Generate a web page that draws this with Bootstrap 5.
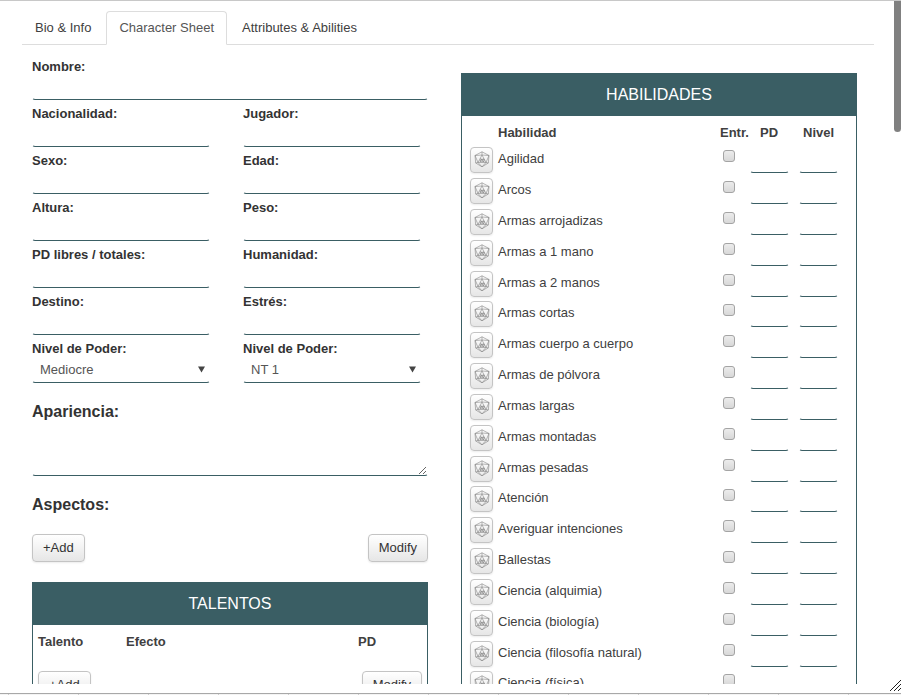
<!DOCTYPE html>
<html lang="es">
<head>
<meta charset="utf-8">
<meta name="viewport" content="width=device-width, initial-scale=1">
<title>Character Sheet</title>
<link rel="stylesheet" href="https://cdn.jsdelivr.net/npm/bootstrap@5.3.0/dist/css/bootstrap.min.css">
<style>
  :root { --teal: #3a5e64; --ink: #404040; }
  body { font: 13px/19px "Liberation Sans", Arial, sans-serif; color: var(--ink); background: #fff; }
  .sheet-window { border-top: 1px solid #c8c8c8; }
  .sheet-scroll { min-height: 0; overflow-y: auto; scrollbar-width: none; padding: 10px 27px 0 22px; }
  .sheet-scroll::-webkit-scrollbar { display: none; }
  .scroll-thumb { width: 7px; height: 131px; background: #808080; border-radius: 0 0 4px 4px; }
  .window-foot { height: 11px; }
  .window-foot .foot-edge { height: 2px; border-top: 1px solid #a8a8a8;
    background: repeating-linear-gradient(90deg, #f4f4f4 0 8px, #ccc 8px 9px, #f4f4f4 9px 70px); }
  .grip { right: 0; bottom: 4px; }

  .nav-tabs { --bs-nav-tabs-border-color: #ddd; --bs-nav-tabs-border-radius: 4px; gap: 2px; }
  .nav-tabs .nav-link { padding: 6px 12px 7px; line-height: 19px; color: var(--ink); font-size: 13px; }
  .nav-tabs .nav-link.active { color: #555; border-color: #ddd #ddd #fff; }

  .sheet-cols { padding: 0 17px 0 10px; gap: 33px; }
  .sheet-cols > * { flex: 1 1 0; min-width: 0; }
  .left-side { padding-top: 8px; }
  .right-side { padding-top: 28px; }
  .field { padding-top: 4px; }
  .field label { display: block; font-weight: bold; color: #333; line-height: 19px; }
  .pairs { display: grid; grid-template-columns: 1fr 1fr; column-gap: 33px; padding-right: 7px; }
  .line-box { display: block; width: 100%; height: 24px; padding: 0 8px; border: 1px solid transparent;
    border-bottom-color: var(--teal); border-radius: 3px; background: transparent; color: #555;
    font-size: 13px; line-height: 19px; outline: 0; }
  select.line-box { height: 25px; padding: 0 7px 3px; appearance: none;
    background: url("data:image/svg+xml,%3Csvg xmlns='http://www.w3.org/2000/svg' width='7' height='7'%3E%3Cpath d='M0 .5h7L3.500 6.500z' fill='%23444'/%3E%3C/svg%3E") no-repeat right 4px top 7px; }
  textarea.line-box { height: 52px; resize: vertical; }
  .block-title { font-size: 16px; line-height: 24px; font-weight: bold; color: #333; margin: 0; }
  .block { padding-top: 17px; }

  .btn-soft { --bs-btn-font-size: 13px; --bs-btn-line-height: 18px; --bs-btn-padding-x: 10px; --bs-btn-padding-y: 4px;
    --bs-btn-border-radius: 4px; --bs-btn-color: #333; --bs-btn-border-color: #c4c4c4; --bs-btn-hover-border-color: #aaa;
    background: linear-gradient(#fff, #e6e6e6); box-shadow: 0 1px 2px rgba(0,0,0,.08); }
  .btn-soft.die { --bs-btn-padding-x: 2px; --bs-btn-padding-y: 2px; width: 23px; height: 26px; display: block; line-height: 0; }

  .panel { border: 1px solid var(--teal); }
  .panel-title { background: var(--teal); color: #fff; font-size: 16px; font-weight: normal; line-height: 42px; text-align: center; margin: 0; }
  .panel table { width: 100%; table-layout: fixed; }
  .panel th { line-height: 19px; padding: 0; }
  .skills { padding: 0 8px; }
  .skills thead tr { height: 31px; }
  .skills thead th { padding: 2px 0 0 1px; }
  .skills tbody tr { height: 31px; }
  .skills tbody tr:nth-child(6n+5) { height: 30px; }
  .skills td { padding: 0; vertical-align: top; line-height: 23px; height: inherit; }
  .skills .line-box { width: 39px; height: 26px; padding: 0 4px; }
  .tick { appearance: none; display: block; width: 12px; height: 12px; margin: 3px 0 0 4px;
    border: 1px solid #a4a4a4; border-radius: 3px; background: linear-gradient(#ececec, #d8d8d8); }
  .tick:checked { background: var(--teal); }
  .talents { padding: 0 5px; }
  #talentos { margin-top: 20px; }
  .c-name { width: 88px; }
  .c-cost { width: 64px; }
  .talents thead tr { height: 33px; }
  .talent-actions { padding: 13px 0; }
  .c-die { width: 28px; }
  .c-tick { width: 31px; }
  .c-num { width: 49px; }
  .skills thead .th-skill { padding-left: 0; }
  .skills thead .th-pd { padding-left: 10px; }
  .skills thead .th-level { padding-left: 4px; }
</style>
<script src="https://cdn.jsdelivr.net/npm/bootstrap@5.3.0/dist/js/bootstrap.bundle.min.js"></script>
</head>
<body>
<svg class="d-none">
  <symbol id="d20" viewBox="0 0 16 18">
    <g fill="none" stroke="#858585" stroke-width=".6" stroke-linejoin="round">
      <path d="M8 .8 15 4.500 14.300 12 8 15.800 1.700 12 1 4.500Z"/>
      <path d="M8 4 4 11.500H12ZM8 .8V4M1 4.500 8 4 15 4.500M1 4.500 4 11.500 1.700 12M15 4.500 12 11.500 14.300 12M4 11.500 8 15.800 12 11.500"/>
      <path stroke="#666" d="M6 8H7.500V9.300H6.200V10.500H7.600M8.600 8H10V10.500H8.600Z"/>
    </g>
  </symbol>
</svg>

<div class="sheet-window vh-100 d-flex flex-column position-relative overflow-hidden">
  <div class="sheet-scroll flex-grow-1">
    <nav class="nav nav-tabs" aria-label="Sheet">
      <a class="nav-link" href="#bio">Bio &amp; Info</a>
      <a class="nav-link active" aria-current="page" href="#sheet">Character Sheet</a>
      <a class="nav-link" href="#attributes">Attributes &amp; Abilities</a>
    </nav>

    <main class="sheet-cols d-flex" id="sheet">
      <div class="left-side">
        <div class="field"><label for="nombre">Nombre:</label><input class="line-box" id="nombre"></div>
        <div class="pairs">
          <div class="field"><label for="nacionalidad">Nacionalidad:</label><input class="line-box" id="nacionalidad"></div>
          <div class="field"><label for="jugador">Jugador:</label><input class="line-box" id="jugador"></div>
          <div class="field"><label for="sexo">Sexo:</label><input class="line-box" id="sexo"></div>
          <div class="field"><label for="edad">Edad:</label><input class="line-box" id="edad"></div>
          <div class="field"><label for="altura">Altura:</label><input class="line-box" id="altura"></div>
          <div class="field"><label for="peso">Peso:</label><input class="line-box" id="peso"></div>
          <div class="field"><label for="pd">PD libres / totales:</label><input class="line-box" id="pd"></div>
          <div class="field"><label for="humanidad">Humanidad:</label><input class="line-box" id="humanidad"></div>
          <div class="field"><label for="destino">Destino:</label><input class="line-box" id="destino"></div>
          <div class="field"><label for="estres">Estrés:</label><input class="line-box" id="estres"></div>
          <div class="field"><label for="poder">Nivel de Poder:</label>
            <select class="line-box" id="poder"><option>Mediocre</option></select></div>
          <div class="field"><label for="nt">Nivel de Poder:</label>
            <select class="line-box" id="nt"><option>NT 1</option></select></div>
        </div>

        <div class="block">
          <label class="block-title d-block" for="apariencia">Apariencia:</label>
          <textarea class="line-box" id="apariencia"></textarea>
        </div>

        <h2 class="block-title block">Aspectos:</h2>
        <div class="d-flex justify-content-between block">
          <button type="button" class="btn btn-soft">+Add</button>
          <button type="button" class="btn btn-soft">Modify</button>
        </div>

        <section class="panel" id="talentos">
          <h2 class="panel-title">TALENTOS</h2>
          <div class="talents">
            <table>
              <colgroup><col class="c-name"><col><col class="c-cost"></colgroup>
              <thead><tr><th>Talento</th><th>Efecto</th><th>PD</th></tr></thead>
            </table>
            <div class="talent-actions d-flex justify-content-between">
              <button type="button" class="btn btn-soft">+Add</button>
              <button type="button" class="btn btn-soft">Modify</button>
            </div>
          </div>
        </section>
      </div>

      <div class="right-side">
        <section class="panel">
          <h2 class="panel-title">HABILIDADES</h2>
          <div class="skills">
            <table>
              <colgroup><col class="c-die"><col><col class="c-tick"><col class="c-num"><col class="c-num"></colgroup>
              <thead><tr><th></th><th class="th-skill">Habilidad</th><th>Entr.</th><th class="th-pd">PD</th><th class="th-level">Nivel</th></tr></thead>
              <tbody id="skill-rows"></tbody>
            </table>
          </div>
        </section>
      </div>
    </main>
  </div>

  <div class="window-foot flex-shrink-0 d-flex flex-column justify-content-end"><div class="foot-edge"></div></div>
  <div class="scroll-thumb position-absolute top-0 end-0"></div>
  <svg class="grip position-absolute" width="11" height="11" viewBox="0 0 11 11" stroke="#222" fill="none"><path d="M0 11 11 0M4 11 11 4M8 11 11 8"/></svg>
</div>

<script>
  const skills = ["Agilidad", "Arcos", "Armas arrojadizas", "Armas a 1 mano", "Armas a 2 manos", "Armas cortas",
    "Armas cuerpo a cuerpo", "Armas de pólvora", "Armas largas", "Armas montadas", "Armas pesadas", "Atención",
    "Averiguar intenciones", "Ballestas", "Ciencia (alquimia)", "Ciencia (biología)", "Ciencia (filosofía natural)",
    "Ciencia (física)"];
  document.getElementById("skill-rows").innerHTML = skills.map((name, i) => `
    <tr>
      <td><button type="button" class="btn btn-soft die" aria-label="Tirar ${name}"><svg width="16" height="18"><use href="#d20"/></svg></button></td>
      <td><label for="skill-${i}">${name}</label></td>
      <td><input type="checkbox" class="tick" id="skill-${i}"></td>
      <td><input class="line-box" aria-label="PD ${name}"></td>
      <td><input class="line-box" aria-label="Nivel ${name}"></td>
    </tr>`).join("");
</script>
</body>
</html>
